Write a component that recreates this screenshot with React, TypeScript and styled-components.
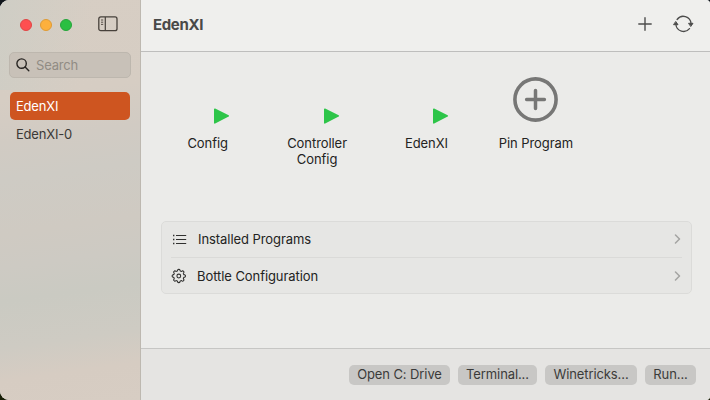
import React from "react";
import styled, { createGlobalStyle } from "styled-components";

const GlobalStyle = createGlobalStyle`
  * { box-sizing: border-box; }
  body {
    margin: 0;
    overflow: hidden;
    background: linear-gradient(#11161c 50%, #171d05 50%);
    font-family: Inter, "Liberation Sans", sans-serif;
    font-size: 13px;
    letter-spacing: -0.07px;
    color: #232322;
  }
`;

const Window = styled.div`
  display: flex;
  width: 710px;
  height: 400px;
  overflow: hidden;
  border-radius: 9px 4px 4px 9px;
  background: #ebebe9;
`;

const Sidebar = styled.aside`
  width: 141px;
  flex: none;
  border-right: 1px solid #bdb8b0;
  background:
    linear-gradient(100deg, rgba(200, 205, 198, 0.55), rgba(210, 204, 196, 0) 60%) 0 0 / 100% 90px no-repeat,
    linear-gradient(172deg, #d7cec4 0%, #d6cdc3 24%, #d1cbc3 34%, #cecbc4 43%, #cfcac2 56%, #cdcac3 64%, #cacac2 72%, #cecbc3 83%, #d6ccc2 91%, #d7cdc3 100%);
`;

const WindowControls = styled.div`
  display: flex;
  align-items: center;
  height: 48px;
  padding: 2px 0 0 20px;
  gap: 8px;
`;

const Light = styled.span<{ $fill: string; $edge: string }>`
  width: 12px;
  height: 12px;
  border-radius: 50%;
  background: ${(p) => p.$fill};
  border: 1px solid ${(p) => p.$edge};
`;

const SidebarToggle = styled.svg`
  display: block;
  margin: -3px 0 0 18px;
`;

const SearchField = styled.div`
  display: flex;
  align-items: center;
  width: 122px;
  height: 26px;
  margin: 4px 0 0 9px;
  padding-left: 6px;
  gap: 6px;
  border: 1px solid #bdb7ae;
  border-radius: 5px;
  background: #c8c1b8;
  color: #918c84;
  letter-spacing: -0.2px;
`;

const BottleList = styled.nav`
  display: flex;
  flex-direction: column;
  margin: 14px 10px 0;
`;

const BottleItem = styled.div<{ $selected?: boolean }>`
  height: 28px;
  line-height: 29px;
  padding-left: 6px;
  border-radius: 5px;
  background: ${(p) => (p.$selected ? "#ce5520" : "transparent")};
  color: ${(p) => (p.$selected ? "#fff" : "#3b3936")};
  letter-spacing: -0.2px;
`;

const Main = styled.main`
  display: flex;
  flex-direction: column;
  flex: 1;
  min-width: 0;
`;

const Toolbar = styled.header`
  display: flex;
  align-items: center;
  height: 52px;
  padding: 0 16px 3px 12px;
  border-bottom: 1px solid #bebebd;
  background: #efefed;
`;

const Title = styled.h1`
  flex: 1;
  margin: 0;
  font-size: 15px;
  font-weight: 700;
  letter-spacing: -0.35px;
  color: #494948;
`;

const ToolbarIcons = styled.div`
  display: flex;
  align-items: center;
  gap: 21px;
  svg { display: block; }
`;

const Content = styled.section`
  flex: 1;
  padding: 20px 18px 0 20px;
`;

const ProgramGrid = styled.div`
  display: grid;
  grid-template-columns: repeat(4, 93.4px);
  column-gap: 16px;
  height: 149px;
`;

const Program = styled.div`
  display: flex;
  flex-direction: column;
  align-items: center;
  text-align: center;
`;

const ProgramIcon = styled.div<{ $corner?: boolean }>`
  display: flex;
  align-items: flex-end;
  justify-content: ${(p) => (p.$corner ? "flex-end" : "center")};
  width: 45px;
  height: 53px;
  margin-bottom: 10px;
  padding-bottom: ${(p) => (p.$corner ? "0" : "3px")};
  svg { display: block; }
`;

const ProgramName = styled.div`
  width: 80px;
  line-height: 16px;
`;

const Settings = styled.div`
  height: 73px;
  padding: 0 9px;
  border: 1px solid #dbdbd9;
  border-radius: 5px;
  background: #e6e6e4;
`;

const SettingsRow = styled.div`
  display: flex;
  align-items: center;
  height: 35px;
  padding-bottom: 1px;
  & + & {
    height: 37px;
    padding-bottom: 0;
    border-top: 1px solid #dadad8;
  }
  svg { display: block; flex: none; }
`;

const SettingsLabel = styled.span`
  flex: 1;
  padding-left: 10px;
`;

const BottomBar = styled.footer`
  display: flex;
  justify-content: flex-end;
  height: 52px;
  padding: 16px 14px 0 0;
  gap: 8px;
  border-top: 1px solid #c6c6c4;
  background: #e5e4e2;
`;

const PushButton = styled.button<{ $width: number }>`
  width: ${(p) => p.$width}px;
  height: 20px;
  padding: 0 0 2px;
  border: 0;
  border-radius: 5px;
  background: #c8c7c5;
  color: #3b3b3a;
  font: inherit;
  line-height: 18px;
  white-space: nowrap;
  letter-spacing: -0.1px;
`;

const PlayIcon = () => (
  <svg width="17" height="18" viewBox="0 0 17 18">
    <path d="M1.8 2.2 L15.3 8.9 L1.8 15.8 Z" fill="#2dc549" stroke="#2dc549" strokeWidth="1.6" strokeLinejoin="round" />
  </svg>
);

const PinIcon = () => (
  <svg width="45" height="45" viewBox="0 0 45 45" fill="none" stroke="#777776" strokeLinecap="round">
    <circle cx="22.5" cy="22.5" r="20.6" strokeWidth="3.6" />
    <path d="M22.5 13.6V31.4M13.6 22.5H31.4" strokeWidth="3.5" />
  </svg>
);

const Chevron = () => (
  <svg width="8" height="10" viewBox="0 0 8 10" fill="none" stroke="#a3a3a2" strokeWidth="1.5" strokeLinecap="round" strokeLinejoin="round">
    <path d="M1.5 1L5.5 5L1.5 9" />
  </svg>
);

const ListIcon = () => (
  <svg width="17" height="14" viewBox="0 0 17 14" fill="none" stroke="#30302f" strokeWidth="1.1">
    <path d="M5 3.5H15.2M5 7.5H15.2M5 11.5H15.2" />
    <path d="M2 3.5H3.4M2 7.5H3.4M2 11.5H3.4" strokeWidth="1.5" />
  </svg>
);

const gearPoints = Array.from({ length: 97 }, (_, i) => {
  const angle = (i / 96) * Math.PI * 2;
  const radius = 5.9 + 0.75 * Math.tanh(2.4 * Math.cos(angle * 8));
  return `${(7.8 + radius * Math.sin(angle)).toFixed(2)},${(7 - radius * Math.cos(angle)).toFixed(2)}`;
}).join(" ");

const GearIcon = () => (
  <svg width="16" height="14" viewBox="0 0 16 14" overflow="visible" fill="none" stroke="#30302f" strokeWidth="1.05" strokeLinejoin="round">
    <polygon points={gearPoints} />
    <circle cx="7.8" cy="7" r="1.9" />
  </svg>
);

const PlusIcon = () => (
  <svg width="14" height="14" viewBox="0 0 14 14" stroke="#4d4d4c" strokeWidth="1.4" strokeLinecap="round">
    <path d="M7 0.8V13.2M0.8 7H13.2" />
  </svg>
);

const RefreshIcon = () => (
  <svg width="21" height="18" viewBox="0 0 21 18" fill="none" stroke="#4d4d4c" strokeWidth="1.3" strokeLinecap="round">
    <path d="M4.1 4.5A7.7 7.7 0 0 1 18 8.5" />
    <path d="M16.5 13.6A7.7 7.7 0 0 1 2.9 9.5" />
    <path d="M15.9 8.3H20L17.95 11.2Z M0.9 9.7H5L2.95 6.8Z" fill="#4d4d4c" strokeWidth="1" strokeLinejoin="round" />
  </svg>
);

export default function App() {
  return (
    <>
      <GlobalStyle />
      <Window>
        <Sidebar>
          <WindowControls>
            <Light $fill="#fe4f50" $edge="#e04645" />
            <Light $fill="#fdb03c" $edge="#df9b35" />
            <Light $fill="#2abf42" $edge="#25a53a" />
            <SidebarToggle width="20" height="16" viewBox="0 0 20 16" fill="none" stroke="#47413b">
              <rect x="0.8" y="0.9" width="18.2" height="13.8" rx="2" strokeWidth="1.3" />
              <path d="M7.3 1V14.5" strokeWidth="1.2" />
              <path d="M3 4H5.2M3 6.2H5.2M3 8.4H5.2" strokeWidth="0.9" />
            </SidebarToggle>
          </WindowControls>
          <SearchField>
            <svg width="14" height="14" viewBox="0 0 14 14" fill="none" stroke="#282522" strokeWidth="1.4" strokeLinecap="round">
              <circle cx="5.6" cy="5.6" r="4.7" />
              <path d="M9.1 9.1L12.8 12.8" />
            </svg>
            Search
          </SearchField>
          <BottleList>
            <BottleItem $selected>EdenXI</BottleItem>
            <BottleItem>EdenXI-0</BottleItem>
          </BottleList>
        </Sidebar>
        <Main>
          <Toolbar>
            <Title>EdenXI</Title>
            <ToolbarIcons>
              <PlusIcon />
              <RefreshIcon />
            </ToolbarIcons>
          </Toolbar>
          <Content>
            <ProgramGrid>
              <Program>
                <ProgramIcon $corner><PlayIcon /></ProgramIcon>
                <ProgramName>Config</ProgramName>
              </Program>
              <Program>
                <ProgramIcon $corner><PlayIcon /></ProgramIcon>
                <ProgramName>Controller Config</ProgramName>
              </Program>
              <Program>
                <ProgramIcon $corner><PlayIcon /></ProgramIcon>
                <ProgramName>EdenXI</ProgramName>
              </Program>
              <Program>
                <ProgramIcon><PinIcon /></ProgramIcon>
                <ProgramName>Pin Program</ProgramName>
              </Program>
            </ProgramGrid>
            <Settings>
              <SettingsRow>
                <ListIcon />
                <SettingsLabel>Installed Programs</SettingsLabel>
                <Chevron />
              </SettingsRow>
              <SettingsRow>
                <GearIcon />
                <SettingsLabel>Bottle Configuration</SettingsLabel>
                <Chevron />
              </SettingsRow>
            </Settings>
          </Content>
          <BottomBar>
            <PushButton $width={101}>Open C: Drive</PushButton>
            <PushButton $width={79}>Terminal...</PushButton>
            <PushButton $width={92}>Winetricks...</PushButton>
            <PushButton $width={51}>Run...</PushButton>
          </BottomBar>
        </Main>
      </Window>
    </>
  );
}
